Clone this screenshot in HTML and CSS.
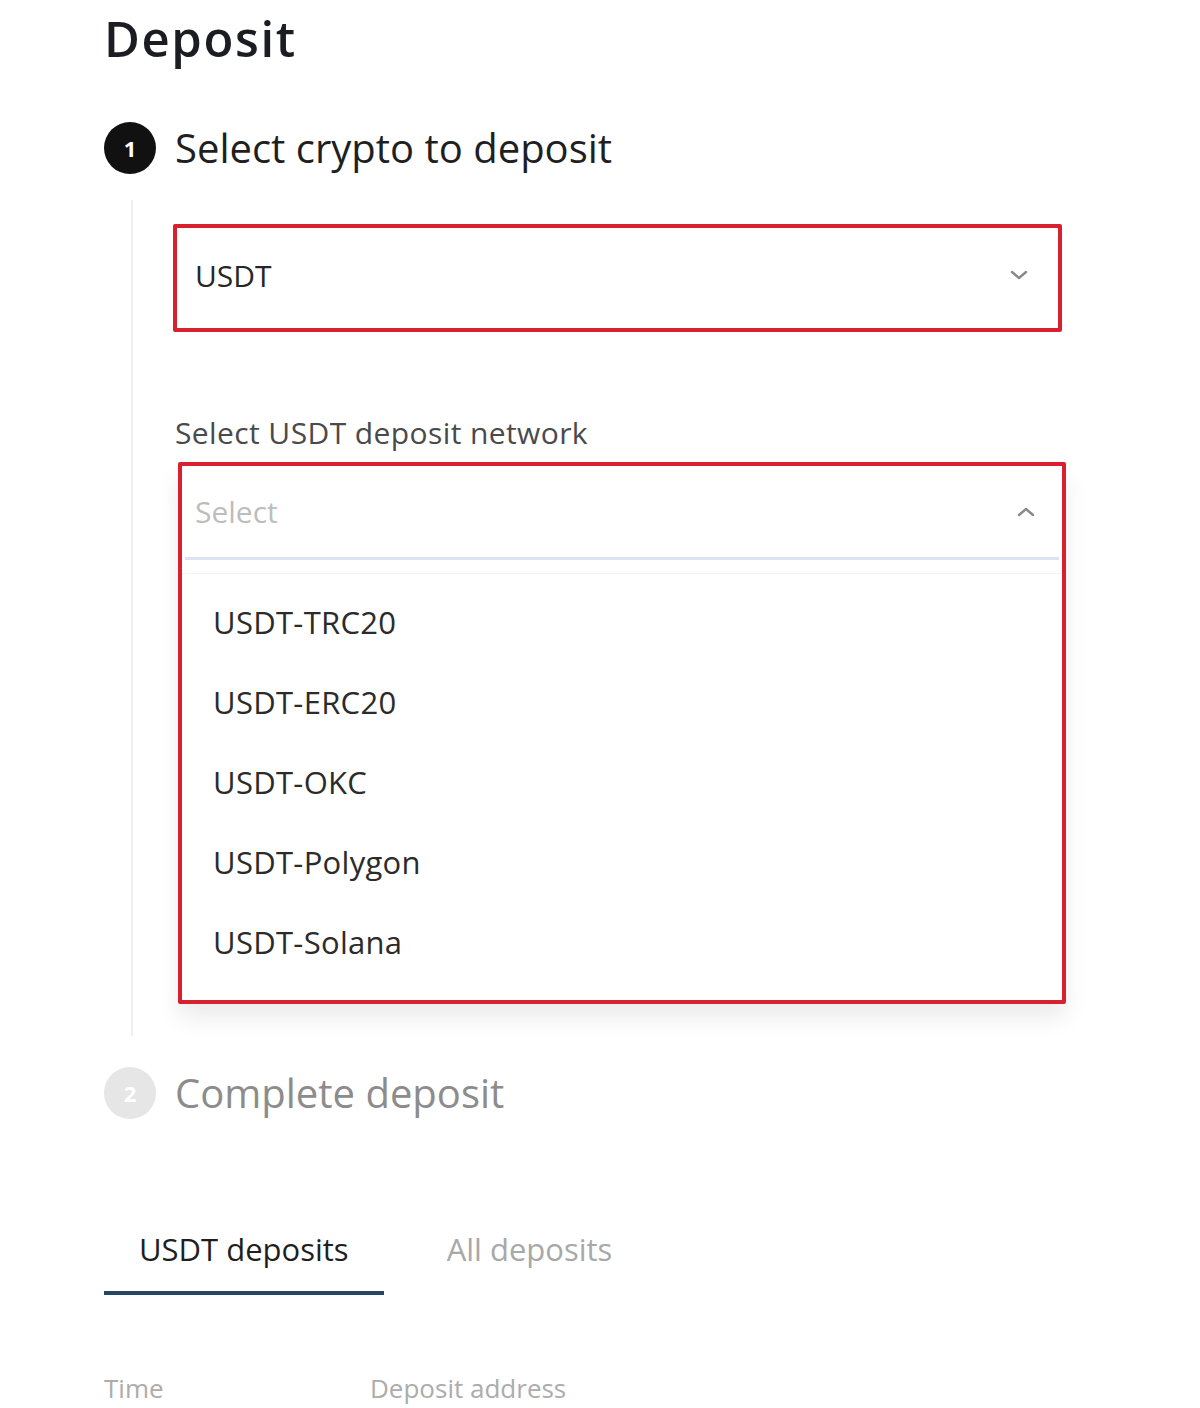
FILE: index.html
```html
<!DOCTYPE html>
<html lang="en">
<head>
<meta charset="utf-8">
<title>Deposit</title>
<link rel="stylesheet" href="styles.css">
</head>
<body>
<main class="page">
  <h1 class="title">Deposit</h1>

  <section class="step">
    <div class="step-head">
      <span class="step-num active">1</span>
      <h2 class="step-title">Select crypto to deposit</h2>
    </div>
    <div class="step-body">
      <div class="select highlight coin-select">
        <span class="select-value">USDT</span>
        <svg class="chev" viewBox="0 0 18 10" width="18" height="10"><path d="M2 2 L9 8 L16 2" fill="none" stroke="#8a8a8a" stroke-width="2.4" stroke-linecap="round" stroke-linejoin="round"/></svg>
      </div>

      <div class="field-label">Select USDT deposit network</div>

      <div class="highlight network-box">
        <div class="select open">
          <span class="select-placeholder">Select</span>
          <svg class="chev" viewBox="0 0 18 10" width="18" height="10"><path d="M2 8 L9 2 L16 8" fill="none" stroke="#8a8a8a" stroke-width="2.4" stroke-linecap="round" stroke-linejoin="round"/></svg>
        </div>
        <ul class="menu">
          <li>USDT-TRC20</li>
          <li>USDT-ERC20</li>
          <li>USDT-OKC</li>
          <li>USDT-Polygon</li>
          <li>USDT-Solana</li>
        </ul>
      </div>
    </div>
  </section>

  <section class="step">
    <div class="step-head">
      <span class="step-num">2</span>
      <h2 class="step-title muted">Complete deposit</h2>
    </div>
  </section>

  <nav class="tabs">
    <span class="tab active">USDT deposits</span>
    <span class="tab">All deposits</span>
  </nav>

  <div class="table-head">
    <span class="col-time">Time</span>
    <span class="col-addr">Deposit address</span>
  </div>
</main>
</body>
</html>
```

FILE: styles.css
```css
* { box-sizing: border-box; }

html, body {
  margin: 0;
  padding: 0;
  background: #ffffff;
}

body {
  font-family: "Open Sans", "Noto Sans", "Liberation Sans", sans-serif;
  color: #222222;
}

.page {
  width: 1200px;
  padding: 10px 0 0 104px;
}

.title {
  margin: 0;
  font-size: 49px;
  line-height: 56px;
  font-weight: 600;
  color: #1b1d22;
  letter-spacing: 1.6px;
}

.step-head {
  display: flex;
  align-items: center;
  gap: 19px;
  height: 52px;
}

.step:first-of-type .step-head {
  margin-top: 56px;
}

.step-num {
  width: 52px;
  height: 52px;
  border-radius: 50%;
  background: #e6e6e6;
  color: #ffffff;
  font-size: 22px;
  font-weight: 700;
  display: flex;
  align-items: center;
  justify-content: center;
  flex-shrink: 0;
}

.step-num.active {
  background: #111111;
}

.step-title {
  margin: 0;
  font-size: 40px;
  line-height: 52px;
  font-weight: 400;
  color: #1f1f1f;
}

.step-title.muted {
  color: #8c8c8c;
}

.step-body {
  margin: 26px 0 0 27px;
  border-left: 2px solid #efefef;
  padding: 24px 0 32px 40px;
  width: 935px;
}

.step + .step .step-head {
  margin-top: 31px;
}

.highlight {
  border: 4px solid #d8202e;
  border-radius: 2px;
}

.select {
  display: flex;
  align-items: center;
  justify-content: space-between;
  padding: 0 30px 0 18px;
}

.coin-select {
  width: 889px;
  height: 108px;
  padding-bottom: 6px;
}

.select-value {
  font-size: 30px;
  color: #262626;
}

.select-placeholder {
  font-size: 30px;
  color: #bdbdbd;
}

.chev {
  display: block;
}

.field-label {
  margin: 81px 0 0 2px;
  font-size: 30px;
  line-height: 40px;
  letter-spacing: 0.4px;
  color: #4a4a4a;
}

.network-box {
  margin: 9px 0 0 5px;
  width: 888px;
  background: #ffffff;
  box-shadow: 0 14px 22px rgba(0, 0, 0, 0.08);
}

.select.open {
  height: 94px;
  margin: 0 3px;
  padding: 0 24px 0 10px;
  border-bottom: 3px solid #dbe3f4;
}

.menu {
  list-style: none;
  margin: 13px 0 0 0;
  padding: 8px 0 18px 0;
  border-top: 1px solid #f3f3f3;
}

.menu li {
  height: 80px;
  display: flex;
  align-items: center;
  padding-left: 31px;
  font-size: 31px;
  letter-spacing: 0.3px;
  color: #2b2b2b;
}

.tabs {
  display: flex;
  gap: 28px;
  margin-top: 110px;
}

.tab {
  padding: 0 35px 22px 35px;
  font-size: 31px;
  line-height: 40px;
  color: #a8a8a8;
  border-bottom: 4px solid transparent;
}

.tab.active {
  color: #1f1f1f;
  border-bottom-color: #264466;
}

.table-head {
  display: flex;
  margin-top: 75px;
  font-size: 26px;
  line-height: 36px;
  color: #acacac;
}

.col-time {
  width: 266px;
}
```
